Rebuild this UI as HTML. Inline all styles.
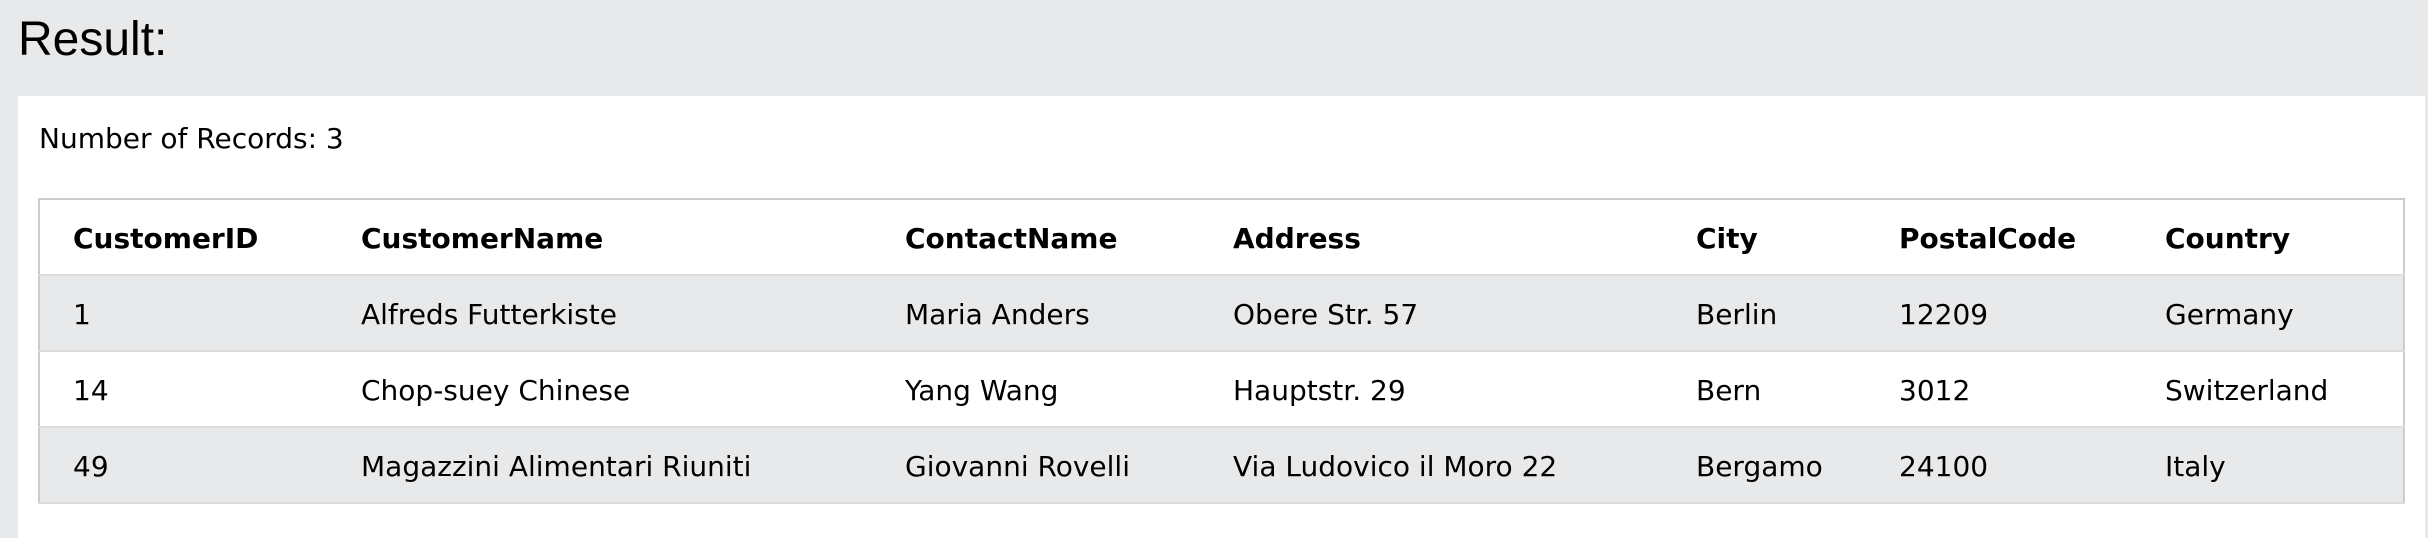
<!DOCTYPE html>
<html><head><style>
html,body{margin:0;padding:0;}
body{width:2428px;height:538px;background:#e8e9eb;position:relative;overflow:hidden;font-family:"DejaVu Sans",Verdana,sans-serif;}
h2{position:absolute;left:18px;top:8px;margin:0;font-family:"Liberation Sans",Arial,sans-serif;font-weight:normal;font-size:48px;line-height:64px;color:#000;}
.panel{position:absolute;left:18px;top:96px;width:2407px;height:442px;background:#fff;}
.num{position:absolute;left:39px;top:122px;font-size:28px;line-height:34px;}
table{position:absolute;left:38px;top:198px;width:2367px;border-collapse:collapse;border:2px solid #ccc;font-size:28px;}
td,th{height:76px;padding:3px 0 0 33px;box-sizing:border-box;text-align:left;vertical-align:middle;}
tr{border-bottom:2px solid #ddd;}
th{font-weight:bold;}
tr.g{background:#e8e9eb;}
</style></head><body>
<h2>Result:</h2>
<div class="panel"></div>
<div class="num">Number of Records: 3</div>
<table>
<colgroup><col style="width:289px"><col style="width:544px"><col style="width:328px"><col style="width:463px"><col style="width:203px"><col style="width:266px"><col></colgroup>
<tr><th>CustomerID</th><th>CustomerName</th><th>ContactName</th><th>Address</th><th>City</th><th>PostalCode</th><th>Country</th></tr>
<tr class="g"><td>1</td><td>Alfreds Futterkiste</td><td>Maria Anders</td><td>Obere Str. 57</td><td>Berlin</td><td>12209</td><td>Germany</td></tr>
<tr><td>14</td><td>Chop-suey Chinese</td><td>Yang Wang</td><td>Hauptstr. 29</td><td>Bern</td><td>3012</td><td>Switzerland</td></tr>
<tr class="g"><td>49</td><td>Magazzini Alimentari Riuniti</td><td>Giovanni Rovelli</td><td>Via Ludovico il Moro 22</td><td>Bergamo</td><td>24100</td><td>Italy</td></tr>
</table>
</body></html>
